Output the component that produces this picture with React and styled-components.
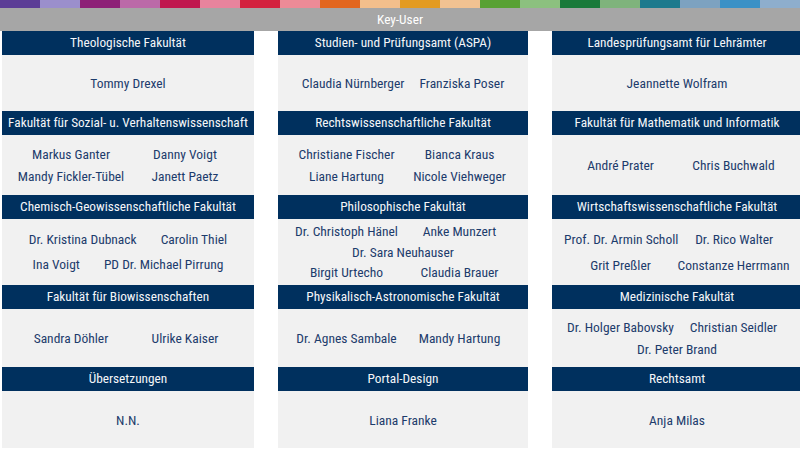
import React from 'react';
import styled, { createGlobalStyle } from 'styled-components';

const GlobalStyle = createGlobalStyle`
  body {
    margin: 0;
    background: #fff;
    font-family: "Roboto Condensed", Roboto, "Liberation Sans", sans-serif;
    font-stretch: condensed;
  }
`;

const stripeColors = [
  '#5c3d96', '#9b8fcc', '#8d1f77', '#bb6aa8', '#c0184f',
  '#e8849d', '#d3223f', '#ec8b97', '#e2661e', '#f3bf8c',
  '#e39b22', '#f1c292', '#58a133', '#8cc07f', '#1a7a3a',
  '#7fb37c', '#1c7a8d', '#7da2c0', '#3b91c6', '#8eaecd',
];

const rows = [
  {
    body: 56,
    cells: [
      { title: 'Theologische Fakultät', lines: [['Tommy Drexel']] },
      { title: 'Studien- und Prüfungsamt (ASPA)', mode: 'inline', gap: 15, lines: [['Claudia Nürnberger', 'Franziska Poser']] },
      { title: 'Landesprüfungsamt für Lehrämter', lines: [['Jeannette Wolfram']] },
    ],
  },
  {
    body: 60,
    cells: [
      { title: 'Fakultät für Sozial- u. Verhaltenswissenschaft', step: 22, lines: [['Markus Ganter', 'Danny Voigt'], ['Mandy Fickler-Tübel', 'Janett Paetz']] },
      { title: 'Rechtswissenschaftliche Fakultät', step: 22, lines: [['Christiane Fischer', 'Bianca Kraus'], ['Liane Hartung', 'Nicole Viehweger']] },
      { title: 'Fakultät für Mathematik und Informatik', lines: [['André Prater', 'Chris Buchwald']] },
    ],
  },
  {
    body: 66,
    cells: [
      { title: 'Chemisch-Geowissenschaftliche Fakultät', mode: 'inline', gap: 24, step: 25, lines: [['Dr. Kristina Dubnack', 'Carolin Thiel'], ['Ina Voigt', 'PD Dr. Michael Pirrung']] },
      { title: 'Philosophische Fakultät', step: 20.5, lines: [['Dr. Christoph Hänel', 'Anke Munzert'], ['Dr. Sara Neuhauser'], ['Birgit Urtecho', 'Claudia Brauer']] },
      { title: 'Wirtschaftswissenschaftliche Fakultät', step: 26, lines: [['Prof. Dr. Armin Scholl', 'Dr. Rico Walter'], ['Grit Preßler', 'Constanze Herrmann']] },
    ],
  },
  {
    body: 58,
    cells: [
      { title: 'Fakultät für Biowissenschaften', lines: [['Sandra Döhler', 'Ulrike Kaiser']] },
      { title: 'Physikalisch-Astronomische Fakultät', lines: [['Dr. Agnes Sambale', 'Mandy Hartung']] },
      { title: 'Medizinische Fakultät', step: 22, lines: [['Dr. Holger Babovsky', 'Christian Seidler'], ['Dr. Peter Brand']] },
    ],
  },
  {
    body: 57,
    cells: [
      { title: 'Übersetzungen', lines: [['N.N.']] },
      { title: 'Portal-Design', lines: [['Liana Franke']] },
      { title: 'Rechtsamt', lines: [['Anja Milas']] },
    ],
  },
];

const Page = styled.div`
  width: 800px;
  height: 450px;
  overflow: hidden;
  background: #fff;
`;

const Stripe = styled.div`
  display: grid;
  grid-template-columns: repeat(20, 40px);
  height: 8px;
`;

const StripeSegment = styled.div`
  background: ${({ $color }) => $color};
`;

const KeyBar = styled.div`
  height: 23px;
  background: #a6a6a6;
  color: #fff;
  font-size: 13.3px;
  line-height: 23px;
  text-align: center;
`;

const Board = styled.div`
  display: grid;
  grid-template-columns: 252px 250px 250px;
  column-gap: 24px;
  padding-left: 2px;
`;

const Card = styled.div`
  display: flex;
  flex-direction: column;
`;

const CardHeader = styled.div`
  height: 24px;
  background: #00305e;
  color: #f4f6f9;
  font-size: 13.3px;
  line-height: 24px;
  text-align: center;
  white-space: nowrap;
`;

const CardBody = styled.div`
  height: ${({ $height }) => $height}px;
  background: #f1f1f1;
  display: flex;
  flex-direction: column;
  justify-content: center;
`;

const NameLine = styled.div`
  height: ${({ $step }) => $step}px;
  line-height: ${({ $step }) => $step}px;
  padding: 0 12px;
  display: ${({ $mode }) => ($mode === 'inline' ? 'flex' : 'grid')};
  grid-template-columns: ${({ $count }) => ($count > 1 ? '1fr 1fr' : '1fr')};
  justify-content: center;
  gap: ${({ $mode, $gap }) => ($mode === 'inline' ? `${$gap}px` : '0')};
`;

const Name = styled.span`
  color: #1d3c6c;
  font-size: 13.5px;
  text-align: center;
  white-space: nowrap;
`;

const App = () => {
  return (
    <Page>
      <GlobalStyle />
      <Stripe>
        {stripeColors.map((color, i) => (
          <StripeSegment key={i} $color={color} />
        ))}
      </Stripe>
      <KeyBar>Key-User</KeyBar>
      <Board>
        {rows.map((row) =>
          row.cells.map((cell) => (
            <Card key={cell.title}>
              <CardHeader>{cell.title}</CardHeader>
              <CardBody $height={row.body}>
                {cell.lines.map((line, i) => (
                  <NameLine
                    key={i}
                    $mode={cell.mode}
                    $gap={cell.gap || 0}
                    $count={line.length}
                    $step={cell.step || 22}
                  >
                    {line.map((name) => (
                      <Name key={name}>{name}</Name>
                    ))}
                  </NameLine>
                ))}
              </CardBody>
            </Card>
          ))
        )}
      </Board>
    </Page>
  );
};

export default App;
